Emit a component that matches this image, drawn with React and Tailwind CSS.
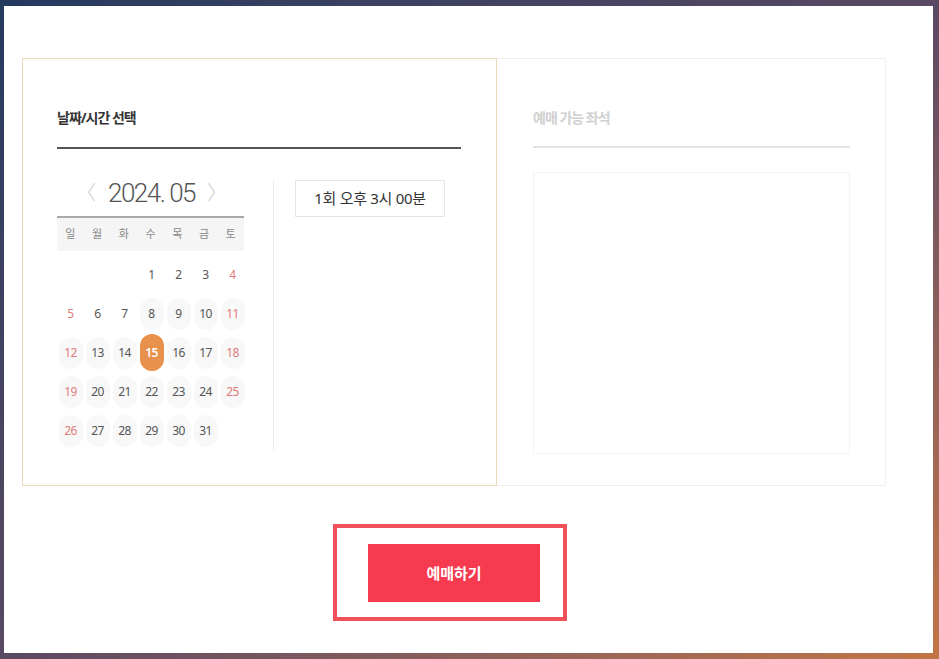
import React from "react";

const rows = [
  [null, null, null, 1, 2, 3, 4],
  [5, 6, 7, 8, 9, 10, 11],
  [12, 13, 14, 15, 16, 17, 18],
  [19, 20, 21, 22, 23, 24, 25],
  [26, 27, 28, 29, 30, 31, null],
];
const days = ["일", "월", "화", "수", "목", "금", "토"];

function Day({ d, col }) {
  if (d === null) return <div className="w-[27px] h-[39px]" />;
  const weekend = col === 0 || col === 6;
  const selected = d === 15;
  const avail = d >= 8 || d === 14;
  let cls = "w-[24px] h-[32px] rounded-full flex items-center justify-center text-[12px] tracking-[-0.5px] ";
  if (selected) cls = "w-[24px] h-[37px] rounded-full flex items-center justify-center text-[12px] tracking-[-0.5px] bg-[#e8914c] text-white font-semibold";
  else {
    cls += avail ? "bg-[#f8f8f8] " : "";
    cls += weekend ? "text-[#e07b7b]" : "text-[#555]";
  }
  return (
    <div className="w-[27px] h-[39px] flex items-center justify-center">
      <div className={cls}>{d}</div>
    </div>
  );
}

export default function App() {
  return (
    <div
      className="w-[939px] h-[659px] pl-[4px] pt-[6px] bg-gradient-to-br from-[#243a5f] via-[#5a4963] to-[#c27546]"
      style={{ fontFamily: '"Noto Sans", "Noto Sans CJK KR", sans-serif' }}
    >
      <div className="w-[929px] h-[647px] bg-white pt-[52px] pl-[18px]">
        <div className="flex">
          {/* Left panel */}
          <div className="w-[475px] h-[428px] border border-[#e8dab4] pl-[34px] pt-[49px]">
            <div className="text-[14px] font-bold text-[#333] tracking-[-1px] leading-[20px]">날짜/시간 선택</div>
            <div className="w-[404px] h-[2px] bg-[#555] mt-[19px]" />
            <div className="flex mt-[26px]">
              <div className="w-[189px]">
                <div className="flex items-center justify-center h-[36px] gap-[12px]">
                  <span className="text-[20px] text-[#ccc] font-light">〈</span>
                  <span className="text-[26px] text-[#555] tracking-[-1.5px] leading-[30px]" style={{ fontFamily: '"Liberation Sans Narrow", "Roboto", sans-serif', fontWeight: 300 }}>2024. 05</span>
                  <span className="text-[20px] text-[#ccc] font-light">〉</span>
                </div>
                <div className="h-[2px] bg-[#aaa] mt-[5px] w-[187px]" />
                <div className="flex bg-[#f5f5f5] h-[33px] w-[187px] items-center">
                  {days.map((d) => (
                    <div key={d} className="w-[27px] text-center text-[11px] text-[#888]">{d}</div>
                  ))}
                </div>
                <div className="mt-[4px]">
                  {rows.map((r, i) => (
                    <div key={i} className="flex">
                      {r.map((d, j) => (
                        <Day key={j} d={d} col={j} />
                      ))}
                    </div>
                  ))}
                </div>
              </div>
              <div className="w-[1px] h-[272px] bg-[#eeeeee] ml-[27px] mt-[4px]" />
              <div className="ml-[21px] mt-[5px]">
                <div className="w-[150px] h-[37px] border border-[#e5e5e5] flex items-center justify-center text-[15px] text-[#333] tracking-[-0.3px]">
                  1회 오후 3시 00분
                </div>
              </div>
            </div>
          </div>
          {/* Right panel */}
          <div className="w-[389px] h-[428px] border-y border-r border-[#efefef] pl-[36px] pt-[49px]">
            <div className="text-[14px] font-bold text-[#d0d0d0] tracking-[-1px] leading-[20px]">예매 가능 좌석</div>
            <div className="w-[317px] h-[2px] bg-[#e3e3e3] mt-[18px]" />
            <div className="w-[317px] h-[282px] mt-[24px] border border-[#f3f3f3]" />
          </div>
        </div>
        {/* Button area */}
        <div className="ml-[311px] mt-[38px] w-[234px] h-[97px] border-[4px] border-[#f2505a] pl-[31px] pt-[16px]">
          <div className="w-[172px] h-[58px] bg-[#f63a50] flex items-center justify-center text-white text-[15px] font-semibold">
            예매하기
          </div>
        </div>
      </div>
    </div>
  );
}
